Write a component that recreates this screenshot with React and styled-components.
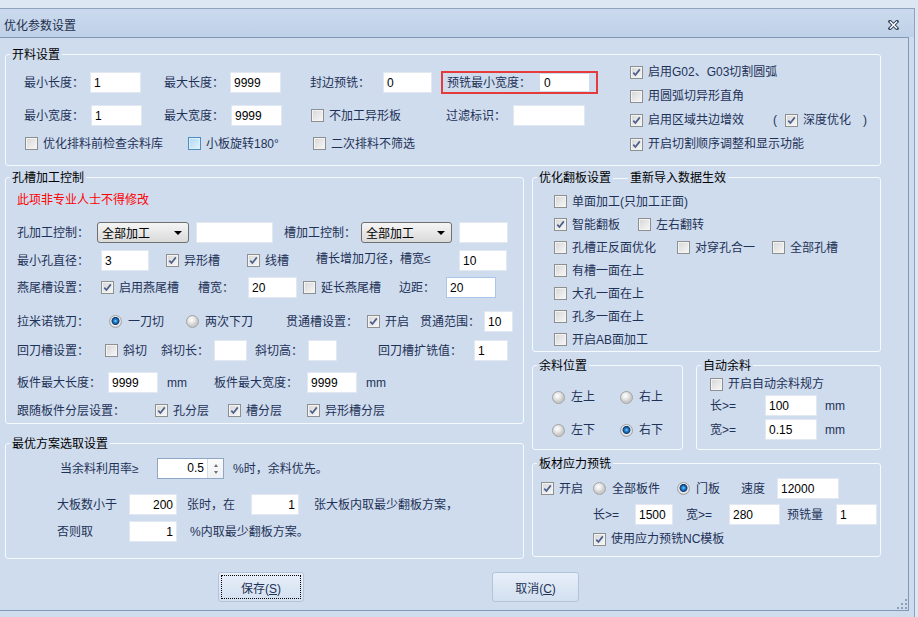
import React from 'react';
import styled, { createGlobalStyle, css } from 'styled-components';

const NAVY = '#1e3257';
const LINE = '#8398b4';

const GlobalStyle = createGlobalStyle`
  html, body { margin: 0; padding: 0; }
  body {
    background: #dde7f3;
    font-family: "Liberation Sans", "Noto Sans CJK SC", sans-serif;
    font-size: 12px;
    color: ${NAVY};
  }
  * { box-sizing: border-box; }
`;

const Window = styled.div`
  margin-top: 8px;
  width: 915px;
  height: 609px;
  background: #cfdcee;
  border-top: 1px solid #8fa3bd;
  border-right: 1px solid #8fa3bd;
`;

const TitleBar = styled.div`
  height: 28px;
  padding: 4px 15px 0 4px;
  display: flex;
  align-items: center;
  justify-content: space-between;
  background: linear-gradient(#cbdaee, #bfd1e8);
`;

const TitleText = styled.span`
  font-family: "Noto Sans CJK SC", sans-serif;
  line-height: 16px;
  color: #1e2f4d;
`;

const Client = styled.div`
  position: relative;
  width: 909px;
  padding: 8px 0 8px 5px;
  border-top: 1px solid ${LINE};
  border-right: 1px solid ${LINE};
  border-bottom: 1px solid ${LINE};
  background: #cfdcee;
`;

const Group = styled.fieldset`
  margin: ${(p) => p.$mt || 0}px 0 0 0;
  padding: 0;
  min-width: 0;
  width: ${(p) => p.$w}px;
  border: 1px solid #f6f9fd;
  border-radius: 3px;
`;

const Legend = styled.legend`
  margin-left: 4px;
  padding: 0 2px;
  line-height: 16px;
  font-family: "Noto Sans CJK SC", sans-serif;
  font-size: 12px;
  color: #000;
`;

const LegendLine = styled.span`
  display: inline-block;
  width: 15px;
  height: 1px;
  margin: 0 2px;
  vertical-align: middle;
  background: #f6f9fd;
`;

const Content = styled.div`
  padding: ${(p) => p.$pad || '0'};
  display: ${(p) => (p.$flex ? 'flex' : 'block')};
`;

const Block = styled.div`
  flex: none;
  width: ${(p) => (p.$w ? `${p.$w}px` : 'auto')};
  margin-top: ${(p) => p.$mt || 0}px;
  padding: ${(p) => p.$pad || '0'};
`;

const Row = styled.div`
  display: flex;
  align-items: center;
  height: ${(p) => p.$h || 21}px;
  margin-top: ${(p) => p.$mt || 0}px;
`;

const Label = styled.span`
  flex: none;
  width: ${(p) => (p.$w ? `${p.$w}px` : 'auto')};
  margin-left: ${(p) => p.$ml || 0}px;
  white-space: nowrap;
  line-height: 16px;
  color: ${(p) => p.$color || NAVY};
  ${(p) => p.$dy && css`position: relative; top: ${p.$dy}px;`}
`;

const Field = styled.input.attrs({ readOnly: true })`
  flex: none;
  width: ${(p) => p.$w}px;
  height: ${(p) => p.$h || 21}px;
  margin-left: ${(p) => p.$ml || 0}px;
  padding: 0 3px;
  border: 1px solid ${(p) => (p.$focus ? '#a9c6e6' : p.$bare ? '#fff' : '#e1e8f1')};
  background: #fff;
  font: 12px "Liberation Sans", sans-serif;
  color: #000;
  text-align: ${(p) => (p.$right ? 'right' : 'left')};
  outline: none;
`;

const CheckItem = styled.div`
  flex: none;
  display: flex;
  align-items: center;
  gap: ${(p) => p.$gap || 5}px;
  width: ${(p) => (p.$w ? `${p.$w}px` : 'auto')};
  margin-left: ${(p) => p.$ml || 0}px;
  white-space: nowrap;
  line-height: 16px;
`;

const Box = styled.span`
  flex: none;
  width: 13px;
  height: 13px;
  display: flex;
  align-items: center;
  justify-content: center;
  border: 1px solid ${(p) => (p.$hover ? '#4d8cc0' : '#8e8f8f')};
  background: ${(p) =>
    p.$hover
      ? 'linear-gradient(135deg, #aed7f2, #e4f3fc)'
      : 'linear-gradient(135deg, #d6d6d6, #f8f8f8)'};
  box-shadow: inset 0 0 0 1px ${(p) => (p.$hover ? '#dcf0fb' : '#f3f3f3')};
`;

const Dot = styled.span`
  flex: none;
  width: 13px;
  height: 13px;
  border-radius: 50%;
  border: 1px solid #a3a3a3;
  background: ${(p) =>
    p.$on
      ? 'radial-gradient(circle at 50% 45%, #8fd8ff 0, #2a86d2 1.5px, #0d3b74 3.6px, #f2f2f2 4.4px, #cdcdcd 6px)'
      : 'radial-gradient(circle at 40% 35%, #ffffff 0, #e9e9e9 3px, #c9c9c9 6px)'};
`;

const Combo = styled.div`
  flex: none;
  width: ${(p) => p.$w}px;
  height: 21px;
  display: flex;
  align-items: center;
  justify-content: space-between;
  padding: 0 6px 0 4px;
  border: 1px solid #707070;
  border-radius: 3px;
  background: linear-gradient(#f5f5f5, #dadada);
  font-family: "Noto Sans CJK SC", sans-serif;
  color: #000;
`;

const Arrow = styled.span`
  width: 0;
  height: 0;
  border-left: 4px solid transparent;
  border-right: 4px solid transparent;
  border-top: 4px solid #000;
`;

const RedBox = styled.div`
  flex: none;
  display: flex;
  align-items: center;
  width: 157px;
  height: 23px;
  margin-left: 9px;
  padding-left: 4px;
  border: 2px solid #e63b3b;
`;

const Spin = styled.div`
  flex: none;
  display: flex;
  width: 67px;
  height: 21px;
  border: 1px solid #8fa6c5;
  background: #fff;
`;

const SpinValue = styled.span`
  flex: 1;
  padding-right: 3px;
  text-align: right;
  line-height: 19px;
  font: 12px/19px "Liberation Sans", sans-serif;
  color: #000;
`;

const SpinArrows = styled.span`
  width: 16px;
  display: flex;
  flex-direction: column;
  align-items: center;
  justify-content: center;
  gap: 4px;
  border-left: 1px solid #d5dde8;
  background: linear-gradient(#fbfbfb, #eef1f5);
`;

const Tri = styled.span`
  width: 0;
  height: 0;
  border-left: 2.5px solid transparent;
  border-right: 2.5px solid transparent;
  ${(p) => (p.$up ? 'border-bottom' : 'border-top')}: 3px solid #707070;
`;

const Columns = styled.div`
  display: grid;
  grid-template-columns: 519px 349px;
  column-gap: 8px;
  align-items: start;
  margin-top: 3px;
`;

const Col = styled.div`
  display: flex;
  flex-direction: column;
`;

const Pair = styled.div`
  display: flex;
  gap: 13px;
  margin-top: 5px;
`;

const ButtonRow = styled.div`
  display: flex;
  margin-top: 13px;
  padding-left: 213px;
`;

const Btn = styled.button`
  flex: none;
  width: ${(p) => p.$w}px;
  height: 30px;
  margin-left: ${(p) => p.$ml || 0}px;
  border: 1px solid #b3c4da;
  border-radius: 3px;
  background: linear-gradient(#e7eff9, #d3e0f0);
  font: inherit;
  color: ${NAVY};
  ${(p) => p.$focus && css`outline: 1px dotted #000; outline-offset: -4px;`}
  u { text-decoration: underline; }
`;

const Grip = styled.svg`
  position: absolute;
  right: 1px;
  bottom: 1px;
`;

function Check({ on, hover, w, ml, children }) {
  return (
    <CheckItem $w={w} $ml={ml}>
      <Box $hover={hover}>
        {on && (
          <svg width="9" height="9" viewBox="0 0 9 9">
            <path d="M1.3 4.6 L3.4 7 L7.8 1.4" fill="none" stroke="#4b5d8c" strokeWidth="1.7" />
          </svg>
        )}
      </Box>
      {children && <span>{children}</span>}
    </CheckItem>
  );
}

function Radio({ on, w, ml, children }) {
  return (
    <CheckItem $w={w} $ml={ml} $gap={6}>
      <Dot $on={on} />
      <span>{children}</span>
    </CheckItem>
  );
}

function Select({ w, children }) {
  return (
    <Combo $w={w}>
      <span>{children}</span>
      <Arrow />
    </Combo>
  );
}

function CloseIcon() {
  return (
    <svg width="11" height="10" viewBox="0 0 11 10">
      <path d="M2 1.5 L9 8.5 M9 1.5 L2 8.5" stroke="#3d4b60" strokeWidth="3.4" strokeLinecap="square" />
      <path d="M2 1.5 L9 8.5 M9 1.5 L2 8.5" stroke="#fff" strokeWidth="1.4" />
    </svg>
  );
}

const gripDots = [
  [8, 0], [4, 4], [8, 4], [0, 8], [4, 8], [8, 8],
];

function StockSettings() {
  return (
    <Group $w={876}>
      <Legend>开料设置</Legend>
      <Content $flex $pad="0 0 0 18px">
        <Block $w={606} $pad="10px 0 11px 0">
          <Row>
            <Label $w={66}>最小长度：</Label>
            <Field $w={51} defaultValue="1" />
            <Label $w={66} $ml={23}>最大长度：</Label>
            <Field $w={51} defaultValue="9999" />
            <Label $w={73} $ml={29}>封边预铣：</Label>
            <Field $w={49} defaultValue="0" />
            <RedBox>
              <Label $w={93}>预铣最小宽度：</Label>
              <Field $w={49} $h={17} $bare defaultValue="0" />
            </RedBox>
          </Row>
          <Row $mt={12}>
            <Label $w={67}>最小宽度：</Label>
            <Field $w={51} defaultValue="1" />
            <Label $w={67} $ml={22}>最大宽度：</Label>
            <Field $w={51} defaultValue="9999" />
            <Check w={135} ml={29}>不加工异形板</Check>
            <Label $w={67}>过滤标识：</Label>
            <Field $w={72} defaultValue="" />
          </Row>
          <Row $mt={7}>
            <Check w={163} ml={1}>优化排料前检查余料库</Check>
            <Check w={125} hover>小板旋转180°</Check>
            <Check>二次排料不筛选</Check>
          </Row>
        </Block>
        <Block $mt={-2}>
          <Row $h={24}><Check on>启用G02、G03切割圆弧</Check></Row>
          <Row $h={24}><Check>用圆弧切异形直角</Check></Row>
          <Row $h={24}>
            <Check on w={140}>启用区域共边增效</Check>
            <Label $w={12} $ml={3}>(</Label>
            <Check on>深度优化</Check>
            <Label $ml={12}>)</Label>
          </Row>
          <Row $h={24}><Check on>开启切割顺序调整和显示功能</Check></Row>
        </Block>
      </Content>
    </Group>
  );
}

function HoleSlotControl() {
  return (
    <Group $w={519}>
      <Legend>孔槽加工控制</Legend>
      <Content $pad="7px 0 2px 11px">
        <Row $h={16}>
          <Label $color="#ff0000">此项非专业人士不得修改</Label>
        </Row>
        <Row $mt={14}>
          <Label $w={80}>孔加工控制：</Label>
          <Select w={92}>全部加工</Select>
          <Field $w={77} $ml={7} defaultValue="" />
          <Label $w={77} $ml={11}>槽加工控制：</Label>
          <Select w={91}>全部加工</Select>
          <Field $w={49} $ml={7} defaultValue="" />
        </Row>
        <Row $mt={7}>
          <Label $w={84}>最小孔直径：</Label>
          <Field $w={48} defaultValue="3" />
          <Check on w={81} ml={17}>异形槽</Check>
          <Check on w={69}>线槽</Check>
          <Label $w={143} $dy={-2}>槽长增加刀径，槽宽≤</Label>
          <Field $w={48} defaultValue="10" />
        </Row>
        <Row $mt={6}>
          <Label $w={84}>燕尾槽设置：</Label>
          <Check on w={97}>启用燕尾槽</Check>
          <Label $w={50}>槽宽：</Label>
          <Field $w={49} defaultValue="20" />
          <Check w={96} ml={6}>延长燕尾槽</Check>
          <Label $w={47}>边距：</Label>
          <Field $w={50} $focus defaultValue="20" />
        </Row>
        <Row $mt={13}>
          <Label $w={92}>拉米诺铣刀：</Label>
          <Radio on w={77}>一刀切</Radio>
          <Radio w={100}>两次下刀</Radio>
          <Label $w={81}>贯通槽设置：</Label>
          <Check on w={53}>开启</Check>
          <Label $w={64}>贯通范围：</Label>
          <Field $w={29} defaultValue="10" />
        </Row>
        <Row $mt={8}>
          <Label $w={88}>回刀槽设置：</Label>
          <Check w={56}>斜切</Check>
          <Label $w={53}>斜切长：</Label>
          <Field $w={33} defaultValue="" />
          <Label $w={53} $ml={8}>斜切高：</Label>
          <Field $w={29} defaultValue="" />
          <Label $w={96} $ml={41}>回刀槽扩铣值：</Label>
          <Field $w={34} defaultValue="1" />
        </Row>
        <Row $mt={11}>
          <Label $w={91}>板件最大长度：</Label>
          <Field $w={50} defaultValue="9999" />
          <Label $w={47} $ml={9}>mm</Label>
          <Label $w={93}>板件最大宽度：</Label>
          <Field $w={50} defaultValue="9999" />
          <Label $ml={9}>mm</Label>
        </Row>
        <Row $mt={7}>
          <Label $w={138}>跟随板件分层设置：</Label>
          <Check on w={73}>孔分层</Check>
          <Check on w={79}>槽分层</Check>
          <Check on>异形槽分层</Check>
        </Row>
      </Content>
    </Group>
  );
}

function BestPlan() {
  return (
    <Group $w={519} $mt={11}>
      <Legend>最优方案选取设置</Legend>
      <Content $pad="7px 0 16px 11px">
        <Row>
          <Label $w={97} $ml={43}>当余料利用率≥</Label>
          <Spin>
            <SpinValue>0.5</SpinValue>
            <SpinArrows>
              <Tri $up />
              <Tri />
            </SpinArrows>
          </Spin>
          <Label $ml={9}>%时，余料优先。</Label>
        </Row>
        <Row $mt={15}>
          <Label $w={72} $ml={40}>大板数小于</Label>
          <Field $w={48} $right defaultValue="200" />
          <Label $w={64} $ml={10}>张时，在</Label>
          <Field $w={48} $right defaultValue="1" />
          <Label $ml={15}>张大板内取最少翻板方案，</Label>
        </Row>
        <Row $mt={6}>
          <Label $w={72} $ml={40}>否则取</Label>
          <Field $w={48} $right defaultValue="1" />
          <Label $ml={13}>%内取最少翻板方案。</Label>
        </Row>
      </Content>
    </Group>
  );
}

function FlipSettings() {
  return (
    <Group $w={349}>
      <Legend>
        优化翻板设置<LegendLine />重新导入数据生效
      </Legend>
      <Content $pad="5px 0 0 21px">
        <Row $h={23}><Check>单面加工(只加工正面)</Check></Row>
        <Row $h={23}>
          <Check on w={84}>智能翻板</Check>
          <Check>左右翻转</Check>
        </Row>
        <Row $h={23}>
          <Check w={123}>孔槽正反面优化</Check>
          <Check w={95}>对穿孔合一</Check>
          <Check>全部孔槽</Check>
        </Row>
        <Row $h={23}><Check>有槽一面在上</Check></Row>
        <Row $h={23}><Check>大孔一面在上</Check></Row>
        <Row $h={23}><Check>孔多一面在上</Check></Row>
        <Row $h={23}><Check>开启AB面加工</Check></Row>
      </Content>
    </Group>
  );
}

function LeftoverPosition() {
  return (
    <Group $w={151}>
      <Legend>余料位置</Legend>
      <Content $pad="14px 0 9px 19px">
        <Row $h={20}>
          <Radio w={68}>左上</Radio>
          <Radio>右上</Radio>
        </Row>
        <Row $h={20} $mt={13}>
          <Radio w={68}>左下</Radio>
          <Radio on>右下</Radio>
        </Row>
      </Content>
    </Group>
  );
}

function AutoLeftover() {
  return (
    <Group $w={185}>
      <Legend>自动余料</Legend>
      <Content $pad="1px 0 9px 13px">
        <Row $h={20}><Check>开启自动余料规方</Check></Row>
        <Row $mt={1}>
          <Label $w={55}>长&gt;=</Label>
          <Field $w={52} defaultValue="100" />
          <Label $ml={8}>mm</Label>
        </Row>
        <Row $mt={3}>
          <Label $w={55}>宽&gt;=</Label>
          <Field $w={52} defaultValue="0.15" />
          <Label $ml={8}>mm</Label>
        </Row>
      </Content>
    </Group>
  );
}

function StressMilling() {
  return (
    <Group $w={349} $mt={5}>
      <Legend>板材应力预铣</Legend>
      <Content $pad="7px 0 7px 8px">
        <Row>
          <Check on w={52}>开启</Check>
          <Radio w={84}>全部板件</Radio>
          <Radio on w={64}>门板</Radio>
          <Label $w={36}>速度</Label>
          <Field $w={62} defaultValue="12000" />
        </Row>
        <Row $mt={5}>
          <Label $w={42} $ml={52}>长&gt;=</Label>
          <Field $w={38} defaultValue="1500" />
          <Label $w={43} $ml={13}>宽&gt;=</Label>
          <Field $w={51} defaultValue="280" />
          <Label $w={49} $ml={7}>预铣量</Label>
          <Field $w={41} defaultValue="1" />
        </Row>
        <Row $h={20} $mt={4}>
          <Check on ml={52}>使用应力预铣NC模板</Check>
        </Row>
      </Content>
    </Group>
  );
}

export default function App() {
  return (
    <>
      <GlobalStyle />
      <Window>
        <TitleBar>
          <TitleText>优化参数设置</TitleText>
          <CloseIcon />
        </TitleBar>
        <Client>
          <StockSettings />
          <Columns>
            <Col>
              <HoleSlotControl />
              <BestPlan />
            </Col>
            <Col>
              <FlipSettings />
              <Pair>
                <LeftoverPosition />
                <AutoLeftover />
              </Pair>
              <StressMilling />
            </Col>
          </Columns>
          <ButtonRow>
            <Btn $w={86} $focus>保存(<u>S</u>)</Btn>
            <Btn $w={87} $ml={188}>取消(<u>C</u>)</Btn>
          </ButtonRow>
          <Grip width="10" height="10" viewBox="0 0 10 10">
            {gripDots.map(([x, y]) => (
              <rect key={`${x}-${y}`} x={x} y={y} width="2" height="2" fill="#8aa0bd" />
            ))}
          </Grip>
        </Client>
      </Window>
    </>
  );
}
